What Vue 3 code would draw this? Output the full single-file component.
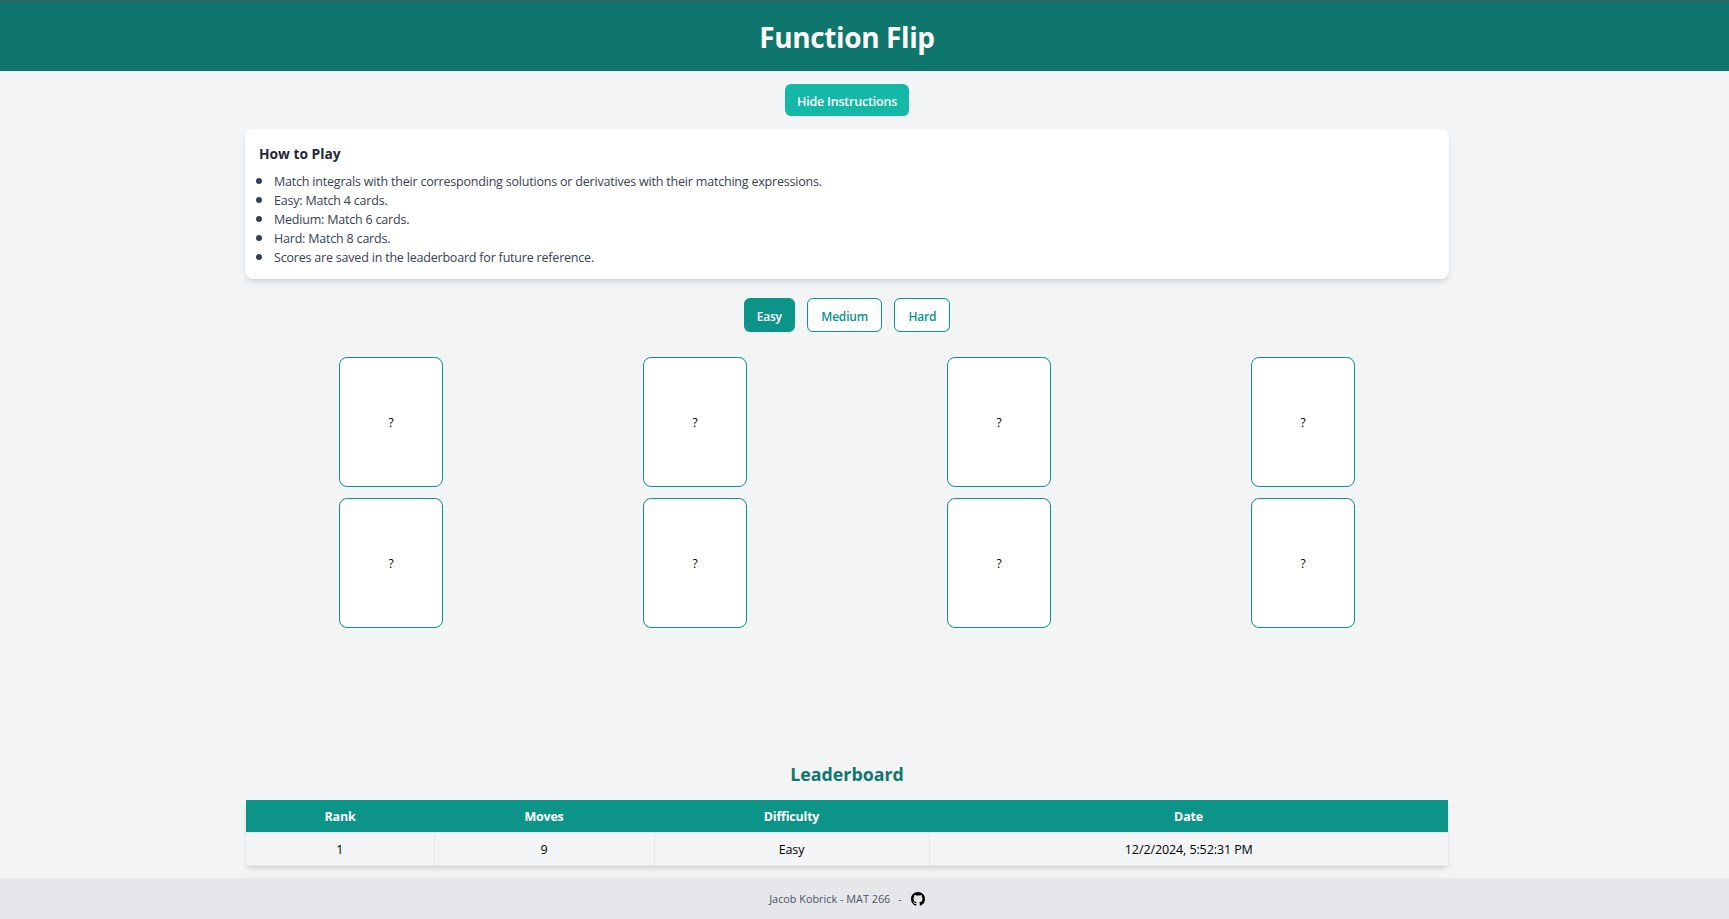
<script setup>
const howTo = [
  'Match integrals with their corresponding solutions or derivatives with their matching expressions.',
  'Easy: Match 4 cards.',
  'Medium: Match 6 cards.',
  'Hard: Match 8 cards.',
  'Scores are saved in the leaderboard for future reference.'
]
const levels = ['Easy', 'Medium', 'Hard']
const cards = 8
</script>

<template>
  <div class="page">
    <header class="top">
      <h1>Function Flip</h1>
    </header>
    <main class="content">
      <button class="toggle">Hide Instructions</button>
      <section class="howto">
        <h2>How to Play</h2>
        <ul>
          <li v-for="line in howTo" :key="line">{{ line }}</li>
        </ul>
      </section>
      <div class="levels">
        <button v-for="l in levels" :key="l" class="level" :class="{ active: l === 'Easy' }">{{ l }}</button>
      </div>
      <div class="board">
        <div v-for="n in cards" :key="n" class="card">?</div>
      </div>
      <h2 class="lb-title">Leaderboard</h2>
      <table class="lb">
        <thead>
          <tr>
            <th class="c1">Rank</th>
            <th class="c2">Moves</th>
            <th class="c3">Difficulty</th>
            <th>Date</th>
          </tr>
        </thead>
        <tbody>
          <tr>
            <td>1</td>
            <td>9</td>
            <td>Easy</td>
            <td>12/2/2024, 5:52:31 PM</td>
          </tr>
        </tbody>
      </table>
    </main>
    <footer class="foot">
      <span>Jacob Kobrick - MAT 266</span>
      <span class="dash">-</span>
      <svg class="gh" viewBox="0 0 16 16" width="14" height="14" aria-hidden="true">
        <path fill="#000" d="M8 0C3.58 0 0 3.58 0 8c0 3.54 2.29 6.53 5.47 7.59.4.07.55-.17.55-.38 0-.19-.01-.82-.01-1.49-2.01.37-2.53-.49-2.69-.94-.09-.23-.48-.94-.82-1.13-.28-.15-.68-.52-.01-.53.63-.01 1.08.58 1.23.82.72 1.21 1.87.87 2.33.66.07-.52.28-.87.51-1.07-1.78-.2-3.64-.89-3.64-3.95 0-.87.31-1.59.82-2.15-.08-.2-.36-1.02.08-2.12 0 0 .67-.21 2.2.82.64-.18 1.32-.27 2-.27s1.36.09 2 .27c1.53-1.04 2.2-.82 2.2-.82.44 1.1.16 1.92.08 2.12.51.56.82 1.27.82 2.15 0 3.07-1.87 3.75-3.65 3.95.29.25.54.73.54 1.48 0 1.07-.01 1.93-.01 2.2 0 .21.15.46.55.38A8.01 8.01 0 0 0 16 8c0-4.42-3.58-8-8-8z"/>
      </svg>
    </footer>
  </div>
</template>

<style>
html, body {
  margin: 0;
  background: #f3f4f6;
}
</style>

<style scoped>
.page {
  width: 1694px;
  min-height: 919px;
  display: flex;
  flex-direction: column;
  font-family: "Open Sans", "Noto Sans", sans-serif;
  color: #1f2937;
  background: #f3f4f6;
}

.top {
  background: #0f766e;
  border-top: 1px solid #4b5563;
  height: 71px;
  width: 1729px;
  padding: 1px 35px 0 0;
  box-sizing: border-box;
  display: flex;
  align-items: center;
  justify-content: center;
}
.top h1 {
  margin: 0;
  color: #fff;
  font-size: 28px;
  font-weight: 700;
  letter-spacing: -0.4px;
}

.content {
  flex: 1;
  width: 1204px;
  margin: 0 auto;
  display: flex;
  flex-direction: column;
  align-items: center;
}

.toggle {
  margin-top: 13px;
  height: 32px;
  width: 124px;
  border: 0;
  border-radius: 6px;
  background: #14b8a6;
  color: #fff;
  font: 600 12.5px "Open Sans", sans-serif;
  letter-spacing: -0.2px;
  padding: 2px 0 0;
}

.howto {
  margin-top: 13px;
  width: 100%;
  height: 150px;
  box-sizing: border-box;
  padding: 15px 14px;
  background: #fff;
  border-radius: 8px;
  box-shadow: 0 4px 6px -1px rgba(0, 0, 0, 0.1), 0 2px 4px -2px rgba(0, 0, 0, 0.1);
}
.howto h2 {
  margin: 0 0 7px;
  font-size: 13.8px;
  line-height: 20px;
  font-weight: 700;
  color: #1f2937;
}
.howto ul {
  margin: 0;
  padding-left: 15px;
  font-size: 12.5px;
  line-height: 19px;
  letter-spacing: -0.2px;
  color: #374151;
}
.howto li {
  height: 19px;
}
.howto li::marker {
  font-size: 16px;
}

.levels {
  margin-top: 19px;
  display: flex;
  gap: 12.5px;
}
.level {
  height: 34px;
  padding: 2px 13px 0;
  border: 1px solid #0d9488;
  border-radius: 6px;
  background: #fff;
  color: #0d9488;
  font: 600 12px "Open Sans", sans-serif;
  letter-spacing: -0.2px;
}
.level.active {
  padding: 2px 12px 0;
  background: #0d9488;
  color: #fff;
}

.board {
  margin-top: 25px;
  width: 100%;
  display: grid;
  grid-template-columns: repeat(4, 1fr);
  gap: 11px 12px;
  justify-items: center;
}
.card {
  width: 104px;
  height: 130px;
  box-sizing: border-box;
  border: 1px solid #0d9488;
  border-radius: 8px;
  background: #fff;
  color: #000;
  font-size: 12px;
  display: flex;
  align-items: center;
  justify-content: center;
}

.lb-title {
  margin: 132px 0 0;
  font-size: 17.8px;
  line-height: 28px;
  font-weight: 700;
  color: #0f766e;
}

.lb {
  margin-top: 12px;
  width: 1202px;
  border-collapse: collapse;
  table-layout: fixed;
  font-size: 12.5px;
  box-shadow: 0 4px 6px -1px rgba(0, 0, 0, 0.1), 0 2px 4px -2px rgba(0, 0, 0, 0.1);
}
.lb th {
  height: 32px;
  padding: 0;
  background: #0d9488;
  color: #fff;
  font-weight: 700;
  letter-spacing: -0.2px;
}
.lb td {
  height: 32px;
  padding: 0;
  text-align: center;
  color: #000;
  letter-spacing: -0.1px;
  border-left: 1px solid #e5e7eb;
  border-top: 1px solid #e5e7eb;
  border-bottom: 1px solid #e5e7eb;
}
.lb td:first-child {
  border-left: 0;
}
.c1 { width: 188px; }
.c2 { width: 220px; }
.c3 { width: 275px; }

.foot {
  width: 1729px;
  padding-right: 35px;
  box-sizing: border-box;
  height: 41px;
  margin-top: 12px;
  background: #e5e7eb;
  display: flex;
  align-items: center;
  justify-content: center;
  gap: 6px;
  font-size: 10.85px;
  color: #4b5563;
}
.dash {
  margin: 0 2px;
}
.gh {
  margin-left: 1px;
}
</style>
